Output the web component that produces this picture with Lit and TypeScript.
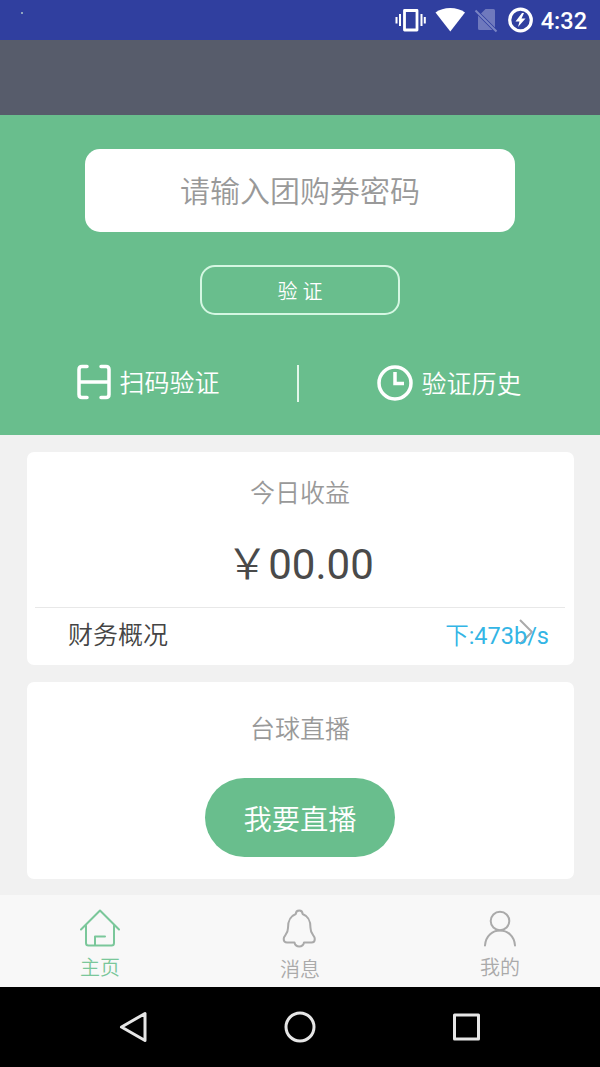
import { LitElement, html, css, svg } from "lit";
import { customElement } from "lit/decorators.js";

const tabs = [
  {
    label: "主页",
    cls: "home",
    icon: svg`<path d="M1 20.500 20 1.500 39 20.500M6 16.500V34Q6 36.500 8.500 36.500H31.500Q34 36.500 34 34V16.500M15 36V27.500H25"/>`,
  },
  {
    label: "消息",
    cls: "news",
    icon: svg`<path d="M15.800 5C16 .3 22.400 .3 22.600 5C29 7.500 30.500 12 30.500 19C30.500 26 34.800 26 34.800 30Q34.800 33.500 31.500 33.500H24C23 38.800 15.500 38.800 14.500 33.500H7Q3.700 33.500 3.700 30C3.700 26 8 26 8 19C8 12 9.500 7.500 15.800 5Z"/>`,
  },
  {
    label: "我的",
    cls: "mine",
    icon: svg`<circle cx="20" cy="12" r="9.300"/><path d="M5 36.500C6.500 16.500 33.500 16.500 35 36.500"/>`,
  },
];

@customElement("app-root")
export class AppRoot extends LitElement {
  static styles = css`
    :host {
      display: flex;
      flex-direction: column;
      width: 600px;
      height: 1067px;
      overflow: hidden;
      background: #f1f1f1;
      font-family: Roboto, "Noto Sans CJK SC", sans-serif;
      font-weight: 350;
    }
    svg { display: block; flex: none; fill: none; }
    .status {
      height: 40px;
      flex: none;
      display: flex;
      align-items: center;
      background: #303f9f;
      color: #fff;
      padding-right: 13px;
      box-sizing: border-box;
    }
    .dot { width: 2px; height: 2px; margin: -15px auto 0 21px; background: #8fa5bf; }
    .time { font-size: 23.500px; font-weight: 500; line-height: 40px; margin: 2px 0 0 7px; }
    .title { height: 75px; flex: none; background: #575c6b; }
    .verify {
      height: 320px;
      flex: none;
      box-sizing: border-box;
      padding-top: 33.500px;
      background: #69be8d;
      color: #fff;
      display: flex;
      flex-direction: column;
      align-items: center;
    }
    .code {
      width: 430px;
      height: 83px;
      border-radius: 15px;
      background: #fff;
      color: #999;
      font-size: 30px;
      line-height: 86px;
      text-align: center;
    }
    .submit {
      box-sizing: border-box;
      width: 200px;
      height: 50px;
      margin-top: 33.500px;
      border: 2px solid #d5f7e2;
      border-radius: 15px;
      font-size: 20px;
      line-height: 50px;
      text-align: center;
    }
    .links { width: 600px; margin-top: 49px; display: flex; align-items: center; height: 38px; font-size: 25px; }
    .link { display: flex; align-items: center; justify-content: center; line-height: 44px; height: 38px; }
    .scan { gap: 8px; width: 297px; }
    .scan svg { margin-bottom: 3px; }
    .history { gap: 8px; flex: 1; }
    .history span { padding-top: 2px; }
    .scan span, .history span { position: relative; top: 1px; }
    .bar { width: 2px; height: 37px; background: #e2f7ea; }
    .cards { flex: none; height: 460px; box-sizing: border-box; padding: 17px 26.500px; display: flex; flex-direction: column; gap: 17px; }
    .card {
      border-radius: 7px;
      background: #fff;
      display: flex;
      flex: none;
      flex-direction: column;
      align-items: center;
      box-sizing: border-box;
    }
    .income { height: 213px; }
    .live { height: 197px; }
    .caption { color: #999; font-size: 25px; line-height: 40px; }
    .income .caption { margin-top: 22px; }
    .live .caption { margin-top: 28px; }
    .amount { color: #4a4a4a; font-size: 42px; line-height: 60px; height: 60px; margin-top: 21px; font-weight: 400; }
    .yen { font-weight: 350; }
    .finance {
      position: relative;
      margin-top: 12px;
      width: 530px;
      flex: 1;
      box-sizing: border-box;
      border-top: 1px solid #e8e8e8;
      padding: 0 33px;
      display: flex;
      align-items: flex-start;
      justify-content: space-between;
      color: #444;
      font-size: 25px;
      line-height: 56px;
    }
    .arrow { margin: 10px -2px 0 0; }
    .speed {
      position: absolute;
      right: 16px;
      top: 0;
      color: #33b5e5;
      font-size: 23.500px;
      font-weight: 400;
    }
    .speed .cjk { font-weight: 350; }
    .go {
      width: 190px;
      height: 79px;
      border-radius: 40px;
      margin-top: 28px;
      background: #69be8d;
      color: #fff;
      font-size: 28.300px;
      line-height: 86px;
      text-align: center;
    }
    .tabs { height: 92px; flex: none; display: flex; background: #f8f8f8; color: #aaa; }
    .tab { flex: 1; display: flex; flex-direction: column; align-items: center; font-size: 20px; line-height: 24px; }
    .tab svg { margin: 14px 0 7px; stroke: currentColor; stroke-width: 2; stroke-linecap: round; stroke-linejoin: round; }
    .home { color: #7ac79a; }
    .news svg { margin-bottom: 9px; }
    .nav { height: 80px; flex: none; background: #000; display: flex; align-items: center; justify-content: center; gap: 134px; }
    .nav svg { stroke: #e6e6e6; stroke-width: 3; stroke-linejoin: round; }
  `;

  render() {
    return html`
      <div class="status">
        <div class="dot"></div>
        <svg width="142" height="40" viewBox="392 0 142 40">
          <path d="M404.500 10.500H417V30H404.500Z" stroke="#fff" stroke-width="2.800" stroke-linejoin="round" />
          <path d="M400 14V26M396.500 17V23.500M421.500 14V26M424.800 17V23.500" stroke="#fff" stroke-width="2" />
          <path d="M435.500 12.500C443 6.500 457.500 6.500 465 12.500L450.300 31.500Z" fill="#fff" />
          <path d="M485.500 9H493.500Q495 9 495 10.500V27.500L481 13.500ZM478 15.500 492.500 30H479.500Q478 30 478 28.500Z" fill="#6f79bd" />
          <path d="M475.500 10.500 496.500 31.500" stroke="#7b85c4" stroke-width="2" />
          <circle cx="520.500" cy="20" r="10.800" stroke="#fff" stroke-width="3.200" />
          <path d="M522 13 515.500 21.500H519.500L518 27 525.500 18.500H521.500L524 13Z" fill="#fff" />
        </svg>
        <div class="time">4:32</div>
      </div>
      <div class="title"></div>
      <section class="verify">
        <div class="code">请输入团购券密码</div>
        <div class="submit">验 证</div>
        <div class="links">
          <div class="link scan">
            <svg width="34" height="36" viewBox="0 0 34 36">
              <path d="M10 2.500H5Q2 2.500 2 5.500V30.500Q2 33.500 5 33.500H10M24 2.500H29Q32 2.500 32 5.500V30.500Q32 33.500 29 33.500H24M2 18H32" stroke="#fff" stroke-width="3.500" stroke-linecap="round" />
            </svg>
            <span>扫码验证</span>
          </div>
          <div class="bar"></div>
          <div class="link history">
            <svg width="36" height="36" viewBox="0 0 36 36">
              <circle cx="18" cy="18" r="16" stroke="#fff" stroke-width="3.500" />
              <path d="M18 7V18.500H27" stroke="#fff" stroke-width="3.500" />
            </svg>
            <span>验证历史</span>
          </div>
        </div>
      </section>
      <main class="cards">
        <section class="card income">
          <div class="caption">今日收益</div>
          <div class="amount"><span class="yen">&#xFFE5;</span>00.00</div>
          <div class="finance">
            <span>财务概况</span>
            <svg class="arrow" width="15" height="28" viewBox="0 0 15 28"><path d="M1 2 13 14 1 26" stroke="#aaa" stroke-width="2" /></svg>
            <span class="speed"><span class="cjk">下</span>:473b/s</span>
          </div>
        </section>
        <section class="card live">
          <div class="caption">台球直播</div>
          <div class="go">我要直播</div>
        </section>
      </main>
      <nav class="tabs">
        ${tabs.map(
          (t) => html`<div class="tab ${t.cls}">
            <svg width="40" height="40" viewBox="0 0 40 40">${t.icon}</svg>
            <span>${t.label}</span>
          </div>`,
        )}
      </nav>
      <div class="nav">
        <svg width="32" height="32" viewBox="0 0 32 32"><path d="M28 2.500V29.500L4.500 16Z" /></svg>
        <svg width="34" height="34" viewBox="0 0 34 34"><circle cx="17" cy="17" r="14" /></svg>
        <svg width="32" height="32" viewBox="0 0 32 32"><path d="M3.500 4H27.500V28H3.500Z" /></svg>
      </div>
    `;
  }
}
